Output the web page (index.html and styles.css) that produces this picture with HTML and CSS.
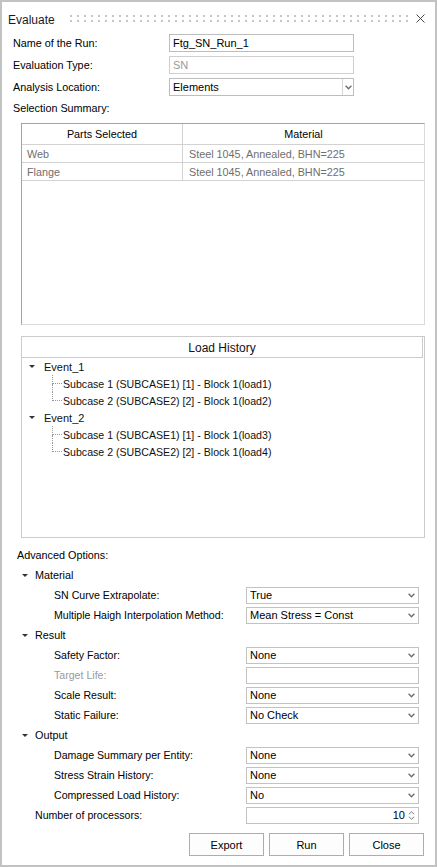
FILE: index.html
```html
<!DOCTYPE html>
<html>
<head>
<meta charset="utf-8">
<title>Evaluate</title>
<link rel="stylesheet" href="styles.css">
</head>
<body>
<div class="window">
  <div class="titlebar">
    <span class="title">Evaluate</span>
    <span class="grip"></span>
    <span class="close"><svg width="9" height="9" viewBox="0 0 9 9"><path d="M0.5 0.5L8.5 8.5M8.5 0.5L0.5 8.5" stroke="#4a4a4a" stroke-width="1" fill="none"/></svg></span>
  </div>

  <div class="form">
    <div class="frow"><span class="flabel">Name of the Run:</span><div class="field">Ftg_SN_Run_1</div></div>
    <div class="frow"><span class="flabel">Evaluation Type:</span><div class="field disabled">SN</div></div>
    <div class="frow"><span class="flabel">Analysis Location:</span><div class="field combo"><span class="ctext">Elements</span><span class="cbtn"><svg width="7" height="5" viewBox="0 0 7 5"><path d="M0.6 0.8L3.5 3.7L6.4 0.8" fill="none" stroke="#707070" stroke-width="1.5"/></svg></span></div></div>
    <div class="frow"><span class="flabel">Selection Summary:</span></div>
  </div>

  <div class="table">
    <div class="trh">
      <div class="c1">Parts Selected</div>
      <div class="c2">Material</div>
    </div>
    <div class="tr">
      <div class="c1">Web</div>
      <div class="c2">Steel 1045, Annealed, BHN=225</div>
    </div>
    <div class="tr">
      <div class="c1">Flange</div>
      <div class="c2">Steel 1045, Annealed, BHN=225</div>
    </div>
  </div>

  <div class="loadbox">
    <div class="lhead">Load History</div>
    <div class="tree">
      <div class="trow"><span class="tarrow"></span><span class="ttext ev">Event_1</span></div>
      <div class="trow child"><span class="branch"><span class="btop"></span><span class="bbot"></span></span><span class="ttext">Subcase 1 (SUBCASE1) [1] - Block 1(load1)</span></div>
      <div class="trow child last"><span class="branch"><span class="btop"></span><span class="bbot"></span></span><span class="ttext">Subcase 2 (SUBCASE2) [2] - Block 1(load2)</span></div>
      <div class="trow"><span class="tarrow"></span><span class="ttext ev">Event_2</span></div>
      <div class="trow child"><span class="branch"><span class="btop"></span><span class="bbot"></span></span><span class="ttext">Subcase 1 (SUBCASE1) [1] - Block 1(load3)</span></div>
      <div class="trow child last"><span class="branch"><span class="btop"></span><span class="bbot"></span></span><span class="ttext">Subcase 2 (SUBCASE2) [2] - Block 1(load4)</span></div>
    </div>
  </div>

  <div class="adv">
    <div class="advlabel">Advanced Options:</div>

    <div class="grp"><span class="garrow"></span><span class="gtext">Material</span></div>
    <div class="orow"><span class="olabel">SN Curve Extrapolate:</span><div class="sel"><span class="stext">True</span><svg class="sarrow" width="7" height="5" viewBox="0 0 7 5"><path d="M0.6 0.8L3.5 3.7L6.4 0.8" fill="none" stroke="#707070" stroke-width="1.5"/></svg></div></div>
    <div class="orow"><span class="olabel">Multiple Haigh Interpolation Method:</span><div class="sel"><span class="stext">Mean Stress = Const</span><svg class="sarrow" width="7" height="5" viewBox="0 0 7 5"><path d="M0.6 0.8L3.5 3.7L6.4 0.8" fill="none" stroke="#707070" stroke-width="1.5"/></svg></div></div>

    <div class="grp"><span class="garrow"></span><span class="gtext">Result</span></div>
    <div class="orow"><span class="olabel">Safety Factor:</span><div class="sel"><span class="stext">None</span><svg class="sarrow" width="7" height="5" viewBox="0 0 7 5"><path d="M0.6 0.8L3.5 3.7L6.4 0.8" fill="none" stroke="#707070" stroke-width="1.5"/></svg></div></div>
    <div class="orow"><span class="olabel dim">Target Life:</span><div class="sel"></div></div>
    <div class="orow"><span class="olabel">Scale Result:</span><div class="sel"><span class="stext">None</span><svg class="sarrow" width="7" height="5" viewBox="0 0 7 5"><path d="M0.6 0.8L3.5 3.7L6.4 0.8" fill="none" stroke="#707070" stroke-width="1.5"/></svg></div></div>
    <div class="orow"><span class="olabel">Static Failure:</span><div class="sel"><span class="stext">No Check</span><svg class="sarrow" width="7" height="5" viewBox="0 0 7 5"><path d="M0.6 0.8L3.5 3.7L6.4 0.8" fill="none" stroke="#707070" stroke-width="1.5"/></svg></div></div>

    <div class="grp"><span class="garrow"></span><span class="gtext">Output</span></div>
    <div class="orow"><span class="olabel">Damage Summary per Entity:</span><div class="sel"><span class="stext">None</span><svg class="sarrow" width="7" height="5" viewBox="0 0 7 5"><path d="M0.6 0.8L3.5 3.7L6.4 0.8" fill="none" stroke="#707070" stroke-width="1.5"/></svg></div></div>
    <div class="orow"><span class="olabel">Stress Strain History:</span><div class="sel"><span class="stext">None</span><svg class="sarrow" width="7" height="5" viewBox="0 0 7 5"><path d="M0.6 0.8L3.5 3.7L6.4 0.8" fill="none" stroke="#707070" stroke-width="1.5"/></svg></div></div>
    <div class="orow"><span class="olabel">Compressed Load History:</span><div class="sel"><span class="stext">No</span><svg class="sarrow" width="7" height="5" viewBox="0 0 7 5"><path d="M0.6 0.8L3.5 3.7L6.4 0.8" fill="none" stroke="#707070" stroke-width="1.5"/></svg></div></div>
    <div class="orow"><span class="olabel top">Number of processors:</span><div class="sel spin"><span class="stext num">10</span><span class="spinbtns"><svg width="7" height="4" viewBox="0 0 7 4"><path d="M0.8 3.3L3.5 0.8L6.2 3.3" fill="none" stroke="#7a7a7a" stroke-width="1"/></svg><svg width="7" height="4" viewBox="0 0 7 4"><path d="M0.8 0.7L3.5 3.2L6.2 0.7" fill="none" stroke="#7a7a7a" stroke-width="1"/></svg></span></div></div>
  </div>

  <div class="buttons">
    <div class="btn">Export</div>
    <div class="btn">Run</div>
    <div class="btn">Close</div>
  </div>
</div>
</body>
</html>
```

FILE: styles.css
```css
html, body {
  margin: 0;
  padding: 0;
  background: #ffffff;
}

.window {
  box-sizing: border-box;
  width: 437px;
  height: 867px;
  border: 2px solid #c2c2c2;
  background: #ffffff;
  font-family: "Liberation Sans", Arial, sans-serif;
  font-size: 10.8px;
  color: #000000;
  display: flex;
  flex-direction: column;
}

/* title bar */
.titlebar {
  display: flex;
  align-items: center;
  height: 24px;
  padding-top: 6px;
  padding-left: 6px;
  padding-right: 10px;
}
.title {
  font-size: 12px;
  color: #1a1a1a;
}
.grip {
  flex: 1;
  height: 7px;
  margin-left: 15px;
  margin-right: 7px;
  margin-bottom: 3px;
  background:
    linear-gradient(90deg, transparent 0 2px, #ffffff 2px 7px) 0 0 / 7px 100%,
    linear-gradient(180deg, transparent 0 2px, #ffffff 2px 5px) 0 0 / 100% 5px,
    #c4c4c4;
}
.close {
  display: flex;
  width: 9px;
  height: 9px;
  margin-bottom: 3px;
}

/* top form */
.form {
  display: flex;
  flex-direction: column;
}
.frow {
  display: flex;
  align-items: center;
  height: 22px;
  padding-left: 11px;
}
.frow:last-child {
  height: 20px;
}
.flabel {
  width: 156px;
  flex: none;
}
.field {
  box-sizing: border-box;
  width: 185px;
  height: 18px;
  border: 1px solid #bdbdbd;
  padding-left: 3px;
  display: flex;
  align-items: center;
  font-size: 11px;
}
.field.disabled {
  color: #9a9a9a;
  border-color: #cfcfcf;
}
.combo {
  padding-left: 0;
}
.ctext {
  flex: 1;
  padding-left: 3px;
}
.cbtn {
  box-sizing: border-box;
  width: 11px;
  height: 100%;
  border-left: 1px solid #d6d6d6;
  display: flex;
  align-items: center;
  justify-content: center;
}

/* selection table */
.table {
  box-sizing: border-box;
  width: 404px;
  height: 202px;
  margin: 5px 0 0 19px;
  border: 1px solid;
  border-color: #a3a3a3 #dadada #dadada #a3a3a3;
}
.trh, .tr {
  display: flex;
  border-bottom: 1px solid #d2d2d2;
}
.trh {
  height: 20px;
  align-items: center;
}
.tr {
  height: 17px;
  align-items: center;
  color: #6e6e6e;
}
.c1 {
  box-sizing: border-box;
  width: 161px;
  height: 100%;
  border-right: 1px solid #d2d2d2;
  display: flex;
  align-items: center;
}
.c2 {
  flex: 1;
  height: 100%;
  display: flex;
  align-items: center;
}
.trh .c1, .trh .c2 {
  justify-content: center;
}
.tr .c1 {
  padding-left: 5px;
}
.tr .c2 {
  padding-left: 6px;
}

/* load history */
.loadbox {
  box-sizing: border-box;
  width: 404px;
  height: 202px;
  margin: 11px 0 0 19px;
  border: 1px solid #cbcbcb;
}
.lhead {
  box-sizing: border-box;
  height: 21px;
  margin-right: 1px;
  border-bottom: 1px solid #cbcbcb;
  border-right: 1px solid #cbcbcb;
  display: flex;
  align-items: center;
  justify-content: center;
  font-size: 12px;
  color: #111;
  padding-top: 1px;
}
.tree {
  display: flex;
  flex-direction: column;
}
.trow {
  display: flex;
  align-items: center;
  height: 17px;
  font-size: 11px;
  color: #111;
}
.tarrow {
  width: 0;
  height: 0;
  margin-left: 7px;
  border-left: 3px solid transparent;
  border-right: 3px solid transparent;
  border-top: 3px solid #333;
}
.ttext.ev {
  margin-left: 9px;
}
.trow.child {
  padding-left: 30px;
  font-size: 10.6px;
}
.branch {
  width: 10px;
  height: 17px;
  display: flex;
  flex-direction: column;
}
.btop {
  box-sizing: border-box;
  height: 9px;
  border-left: 1px dotted #9a9a9a;
  border-bottom: 1px dotted #9a9a9a;
}
.bbot {
  height: 8px;
  border-left: 1px dotted #9a9a9a;
}
.trow.last .bbot {
  border-left-color: transparent;
}
.trow.child .ttext {
  margin-left: 1px;
}

/* advanced options */
.adv {
  display: flex;
  flex-direction: column;
  margin-top: 7px;
}
.advlabel {
  height: 20px;
  display: flex;
  align-items: center;
  padding-left: 15px;
}
.grp {
  height: 20px;
  display: flex;
  align-items: center;
  padding-left: 20px;
}
.garrow {
  width: 0;
  height: 0;
  border-left: 3px solid transparent;
  border-right: 3px solid transparent;
  border-top: 3px solid #333;
}
.gtext {
  margin-left: 7px;
}
.orow {
  height: 20px;
  display: flex;
  align-items: center;
  padding-right: 16px;
}
.olabel {
  flex: 1;
  padding-left: 52px;
  font-size: 10.6px;
}
.olabel.top {
  padding-left: 33px;
}
.olabel.dim {
  color: #9a9a9a;
}
.sel {
  box-sizing: border-box;
  width: 173px;
  height: 17px;
  border: 1px solid #c2c2c2;
  display: flex;
  align-items: center;
  padding-left: 3px;
  padding-right: 3px;
  font-size: 11px;
}
.stext {
  flex: 1;
}
.sarrow {
  flex: none;
}
.spin .num {
  text-align: right;
  padding-right: 3px;
}
.spinbtns {
  display: flex;
  flex-direction: column;
  gap: 1px;
}
.spinbtns svg {
  display: block;
}

/* buttons */
.buttons {
  display: flex;
  justify-content: flex-end;
  gap: 5px;
  margin-top: 8px;
  padding-right: 11px;
}
.btn {
  box-sizing: border-box;
  width: 75px;
  height: 23px;
  border: 1px solid #adadad;
  background: #fdfdfd;
  display: flex;
  align-items: center;
  justify-content: center;
  font-size: 11px;
}
```
